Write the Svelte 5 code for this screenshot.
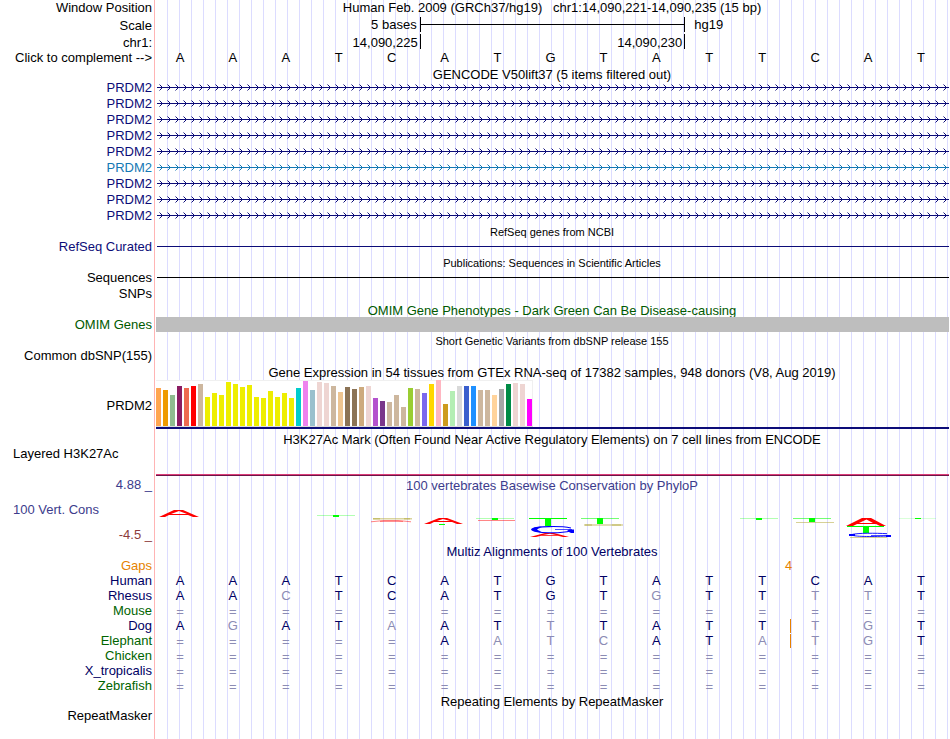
<script>
  const complement = 'AAATCATGTATTCAT';
  const genes = ['navy', 'navy', 'navy', 'navy', 'navy', 'blue', 'navy', 'navy', 'navy'];

  const heights = [
    38, 36, 31, 40, 38, 40, 42, 29, 33, 31, 44, 42, 39, 41, 29, 28, 35, 29, 33, 28, 38, 45, 36, 44, 43, 40, 34,
    39, 37, 39, 40, 28, 25, 24, 31, 19, 38, 37, 33, 42, 46, 22, 35, 40, 40, 40, 36, 36, 31, 37, 42, 43, 42, 27
  ];
  const colors = [
    '#ffa54f', '#ee9a00', '#8fbc8f', '#8b1c62', '#ee6a50', '#ff0000', '#cdb79e',
    ...Array(13).fill('#eeee00'),
    '#00cdcd', '#ee82ee', '#9ac0cd', '#eed5d2', '#eed5d2', '#cdb79e', '#eec591',
    '#8b7355', '#8b7355', '#cdaa7d', '#eed5d2', '#b452cd', '#7a378b', '#cdb79e', '#cdb79e', '#cdb79e',
    '#9acd32', '#cdb79e', '#7b68ee', '#ffd700', '#ffb6c1', '#cd9b1d', '#b4eeb4', '#d9d9d9', '#3a5fcd',
    '#1e90ff', '#cdb79e', '#cdb79e', '#ffd39b', '#a6a6a6', '#008b45', '#eed5d2', '#eed5d2', '#ff00ff'
  ];
  const tissues = heights.map((height, i) => ({ height, color: colors[i] }));

  const human = 'AAATCATGTATTCAT';
  const species = [
    { name: 'Human', tone: 'deep', bases: human },
    { name: 'Rhesus', tone: 'deep', bases: 'AACTCATGTGTTTTT' },
    { name: 'Mouse', tone: 'green', bases: '===============' },
    { name: 'Dog', tone: 'deep', bases: 'AGATAATTTATTTGT', insert: true },
    { name: 'Elephant', tone: 'green', bases: '=====AATCATATGT', insert: true },
    { name: 'Chicken', tone: 'green', bases: '===============' },
    { name: 'X_tropicalis', tone: 'deep', bases: '===============' },
    { name: 'Zebrafish', tone: 'green', bases: '===============' }
  ];
</script>

{#snippet title(text, tone = '', size = '')}
  <div class="row title">
    <span></span>
    <h2 class={[tone, size]}>{text}</h2>
  </div>
{/snippet}

<main class="browser">
  <div class="row">
    <span class="label">Window Position</span>
    <h1>Human Feb. 2009 (GRCh37/hg19)&nbsp;&nbsp; chr1:14,090,221-14,090,235 (15 bp)</h1>
  </div>
  <div class="row scale">
    <span class="label">Scale</span>
    <div class="bases">
      <span class="scale-size">5 bases</span>
      <span class="scale-bar"><i></i></span>
      <span class="assembly">hg19</span>
    </div>
  </div>
  <div class="row coordinates">
    <span class="label">chr1:</span>
    <div class="bases">
      <span class="position">14,090,225</span>
      <span class="position">14,090,230</span>
    </div>
  </div>
  <div class="row">
    <span class="label">Click to complement --&gt;</span>
    <div class="bases">
      {#each complement as base}<span class="base">{base}</span>{/each}
    </div>
  </div>

  <div class="row gencode-title">
    <span></span>
    <h2>GENCODE V50lift37 (5 items filtered out)</h2>
  </div>
  {#each genes as tone, i}
    <div class="row {tone}">
      <span class="label">PRDM2</span>
      <svg class="intron" aria-hidden="true">
        <defs>
          <pattern id="strand-{i}" width="8" height="16" patternUnits="userSpaceOnUse">
            <path d="M2.5 4.5l3 3l-3 3" fill="none" stroke="currentColor" />
          </pattern>
        </defs>
        <rect width="100%" height="16" fill="url(#strand-{i})" />
        <rect y="7" width="100%" height="1" fill="currentColor" />
      </svg>
    </div>
  {/each}

  {@render title('RefSeq genes from NCBI', '', 'small')}
  <div class="row navy">
    <span class="label">RefSeq Curated</span>
    <div class="line"></div>
  </div>

  {@render title('Publications: Sequences in Scientific Articles', '', 'small')}
  <div class="row">
    <span class="label">Sequences</span>
    <div class="line"></div>
  </div>
  <div class="row"><span class="label">SNPs</span></div>

  {@render title('OMIM Gene Phenotypes - Dark Green Can Be Disease-causing', 'omim')}
  <div class="row">
    <span class="label omim">OMIM Genes</span>
    <div class="band"></div>
  </div>

  {@render title('Short Genetic Variants from dbSNP release 155', '', 'small')}
  <div class="row"><span class="label">Common dbSNP(155)</span></div>

  {@render title('Gene Expression in 54 tissues from GTEx RNA-seq of 17382 samples, 948 donors (V8, Aug 2019)')}
  <div class="row gtex">
    <span class="label">PRDM2</span>
    <div class="expression">
      <div class="chart">
        {#each tissues as t}<i style="height:{t.height}px;background:{t.color}"></i>{/each}
      </div>
    </div>
  </div>

  {@render title('H3K27Ac Mark (Often Found Near Active Regulatory Elements) on 7 cell lines from ENCODE', '', 'tight')}
  <div class="row h3k">
    <span class="label start">Layered H3K27Ac</span>
    <div class="signal"></div>
  </div>

  <div class="row title indigo">
    <span class="label">4.88 _</span>
    <h2 class="tight">100 vertebrates Basewise Conservation by PhyloP</h2>
  </div>
  <div class="row phylop">
    <div class="axis">
      <span class="label start indigo">100 Vert. Cons</span>
      <span class="label maroon">-4.5 _</span>
    </div>
    <svg viewBox="155 493 794 51" preserveAspectRatio="none" role="img" aria-label="PhyloP conservation logo">
      <g fill="#f00" fill-rule="evenodd">
        <path d="M159 517L174 510H183L199 517H193L188 515H169L165 517ZM171 514H187L179 511Z" />
        <path d="M424 524L439 518H447L463 524H457L452 522H434L430 524ZM437 521H450L443 519Z" />
        <path d="M846 526L862 518H871L886 526H880L876 524H857L853 526ZM859 523H873L866.500 519.500Z" />
        <path d="M530 537L545 533H554L569 537H563L558 535.800H541L536 537ZM543 535H556L550 533.800Z" />
      </g>
      <g fill="none" stroke="#f00">
        <path d="M371 521.8L384 520.5H398L411 521.8M380 521.4H403" stroke-width=".7" opacity=".7" />
        <path d="M478 520.5H515" stroke-width=".8" opacity=".6" />
      </g>
      <g fill="#0f0">
        <path d="M333 515h6v2h-6zM439 524h6v1h-6zM492 518h6v2h-6zM545 518h6v8h-6zM597 518h6v6h-6zM756 518h6v2h-6zM809 518h6v4h-6zM863 526h6v7h-6zM915 518h6v1h-6z" />
        <path d="M529 518h38v1h-38zM847 526h37v1h-37z" />
        <path d="M581 518h38v1h-38zM793 518h38v1h-38z" opacity=".55" />
        <path d="M317 515h38v1h-38zM476 518h38v1h-38zM740 518h38v1h-38z" opacity=".3" />
        <path d="M899 518h37v1h-37z" opacity=".15" />
      </g>
      <g fill="none" stroke="#b4aa3c">
        <path d="M373 518.7H412" stroke-width="1.6" opacity=".5" />
        <path d="M373 518.7H380M404 518.7H410" stroke-width="1.6" opacity=".5" />
        <path d="M584 525H623" stroke-width="1.5" opacity=".5" />
        <path d="M585 525H592M612 525H621" stroke-width="1.5" opacity=".5" />
        <path d="M796 522.5H834M850 537.5H887" stroke-width=".9" opacity=".6" />
      </g>
      <g fill="none" stroke="#00f">
        <path d="M571 528C560 525.8 536 526 532.5 529.5C535 533.5 560 533.6 571 531" stroke-width="1.1" />
        <path d="M531 529.5C532 527.5 536 526.8 542 526.6L537 529.5L542 532.4C536 532.2 532 531.5 531 529.5Z" fill="#00f" stroke="none" />
        <path d="M555 529.5H572" stroke-width=".7" />
        <path d="M569 529.5H574V533H571L567 531Z" fill="#00f" stroke="none" />
        <path d="M887 533.7C876 533 857 533 852 534.5C850 536.5 870 537 888 536" stroke-width=".9" />
        <path d="M849 534h6v2h-6zM886 535h5v2h-5z" fill="#00f" stroke="none" />
        <path d="M871 535.5H888" stroke-width=".7" />
      </g>
    </svg>
  </div>

  {@render title('Multiz Alignments of 100 Vertebrates', 'deep', 'tight')}
  <div class="row align orange">
    <span class="label">Gaps</span>
    <div class="bases"><span class="base gap">4</span></div>
  </div>
  {#each species as s}
    <div class="row align">
      <span class="label {s.tone}">{s.name}</span>
      <div class="bases">
        {#each s.bases as base, i}
          <span class={['base', base === human[i] ? 'deep' : 'faded', { insert: s.insert && i === 12, unaligned: base === '=' }]}>{base}</span>
        {/each}
      </div>
    </div>
  {/each}

  {@render title('Repeating Elements by RepeatMasker', '', 'tight')}
  <div class="row align"><span class="label">RepeatMasker</span></div>
</main>

<style>
  :global(body) {
    margin: 0;
    background: #fff;
  }
  .browser {
    box-sizing: border-box;
    min-height: 100vh;
    padding-right: 1px;
    font: 13px/16px "Liberation Sans", Arial, Helvetica, sans-serif;
    color: #000;
    background:
      linear-gradient(to right, #fff 154px, #ffb4b4 154px 155px, #fff 155px 156px, transparent 156px),
      linear-gradient(to right, #dcdcff 1px, transparent 1px) 167px 0 / 12px 100%;
  }
  .row {
    display: grid;
    grid-template-columns: 155px minmax(0, 1fr);
    height: 16px;
    white-space: nowrap;
  }
  .row.title {
    height: 15px;
    line-height: 14px;
  }
  .row.align {
    height: 15px;
    line-height: 13px;
  }
  .row.gencode-title {
    height: 14px;
  }
  .row.scale {
    height: 18px;
    line-height: 18px;
  }
  .row.scale .label {
    line-height: 20px;
  }
  .row.coordinates {
    line-height: 18px;
  }
  h1,
  h2 {
    margin: 0;
    font-size: 13px;
    font-weight: normal;
    text-align: center;
  }
  h2 {
    line-height: 17px;
  }
  h2.small {
    font-size: 11px;
  }
  h2.tight {
    line-height: 15px;
  }
  .label {
    padding-right: 3px;
    text-align: right;
  }
  .label.start {
    padding-left: 13px;
    text-align: left;
  }
  .navy { color: #0c0c78; }
  .blue { color: #1478b4; }
  .deep { color: #000064; }
  .green { color: #006400; }
  .omim { color: #005a00; }
  .indigo { color: #3c3c8c; }
  .maroon { color: #8c3c3c; }
  .orange { color: #e68200; }
  .faded { color: #8c8cb4; }

  .bases {
    display: grid;
    grid-template-columns: repeat(15, minmax(0, 1fr));
  }
  .base {
    padding-right: 3px;
    text-align: center;
  }
  .base.unaligned {
    line-height: 15px;
  }
  .base.gap {
    grid-column: 12 / span 2;
  }
  .base.insert {
    height: 14px;
    box-shadow: inset 1px 0 #e68200;
  }
  .scale-size {
    grid-column: span 5;
    padding-right: 3px;
    text-align: right;
  }
  .scale-bar {
    grid-column: span 5;
    display: flex;
    align-items: center;
    height: 15px;
    margin: 1px -1px 0 0;
    border: solid #000;
    border-width: 0 1px;
  }
  .scale-bar i {
    flex: 1;
    height: 1px;
    background: #000;
  }
  .assembly {
    grid-column: span 5;
    padding-left: 10px;
  }
  .position {
    grid-column: span 5;
    height: 15px;
    margin-right: -1px;
    padding-right: 2px;
    border-right: 1px solid #000;
    text-align: right;
  }

  .intron {
    display: block;
    box-sizing: border-box;
    width: calc(100% - 2px);
    height: 16px;
    margin-left: 2px;
  }
  .line {
    height: 1px;
    margin: 7px 0 0 2px;
    background: currentColor;
  }
  .band {
    position: relative;
    height: 15px;
    margin-left: 1px;
    background: #bebebe;
  }

  .row.gtex {
    height: 53px;
    line-height: 53px;
  }
  .expression {
    height: 47px;
    margin: 1px 0 0 1px;
    border-bottom: 2px solid #0c0c78;
  }
  .chart {
    box-sizing: border-box;
    display: flex;
    align-items: flex-end;
    gap: 2px;
    width: 377px;
    height: 47px;
    border-bottom: 1px solid #dcdcdc;
    background: #fff;
    box-shadow: inset 0 1px #f0f0f0, inset -1px 0 #f0f0f0;
  }
  .chart i {
    width: 5px;
  }
  .row.h3k {
    height: 31px;
    line-height: 14px;
  }
  .signal {
    height: 1px;
    margin: 27px 0 0 1px;
    border-bottom: 1px solid #6e1446;
    background: #dc3c78;
  }
  .row.phylop {
    height: 51px;
  }
  .axis {
    display: flex;
    flex-direction: column;
    justify-content: space-between;
    padding: 9px 0 1px;
  }
  .phylop svg {
    display: block;
    width: 100%;
    height: 51px;
  }
</style>
